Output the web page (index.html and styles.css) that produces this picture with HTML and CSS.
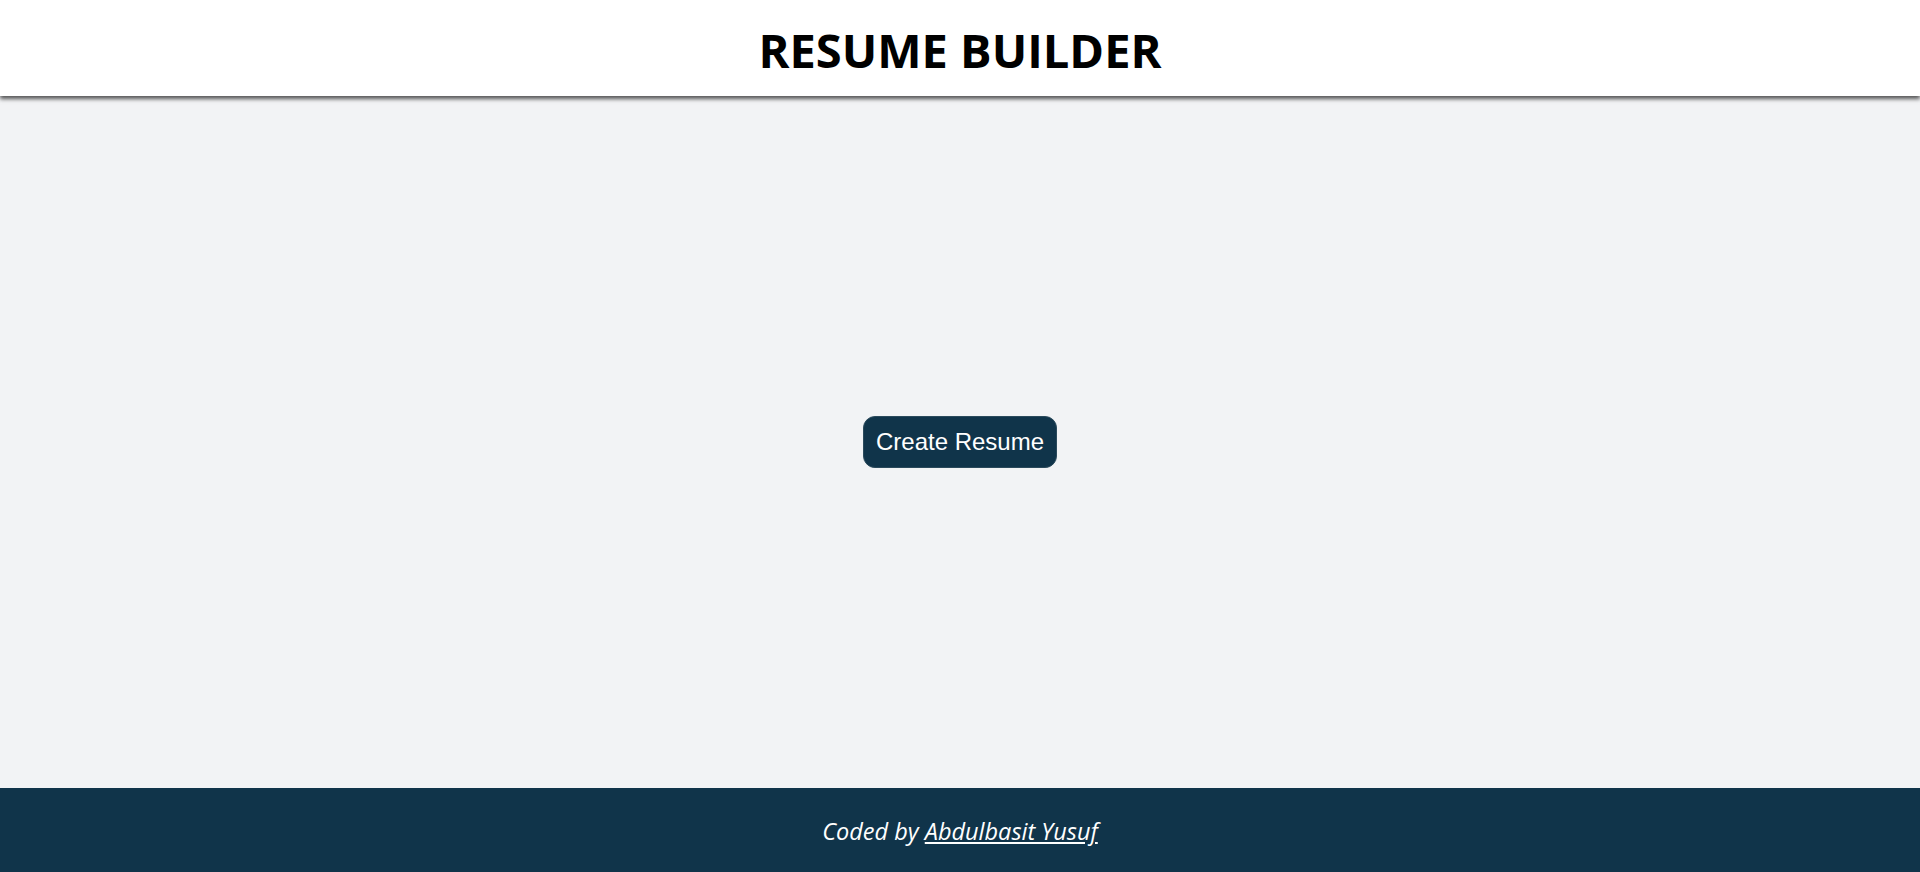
FILE: index.html
```html
<!DOCTYPE html>
<html lang="en">
<head>
<meta charset="utf-8">
<title>Resume Builder</title>
<link rel="stylesheet" href="styles.css">
</head>
<body>
<header class="site-header">
  <h1 class="site-title">RESUME BUILDER</h1>
</header>
<main class="content">
  <button class="create-btn" type="button">Create Resume</button>
</main>
<footer class="site-footer">
  <p class="credit">Coded by <a class="credit-link" href="#">Abdulbasit Yusuf</a></p>
</footer>
</body>
</html>
```
FILE: styles.css
```css
* { box-sizing: border-box; }
html, body { height: 100%; }
body {
  margin: 0;
  display: flex;
  flex-direction: column;
  min-height: 100vh;
  background: #f2f3f5;
  font-family: "Open Sans", "Noto Sans", sans-serif;
}
.site-header {
  height: 96px;
  background: #ffffff;
  display: flex;
  align-items: center;
  justify-content: center;
  box-shadow: 0 3px 4px rgba(0, 0, 0, 0.65);
  position: relative;
  z-index: 1;
}
.site-title {
  margin: 0;
  font-size: 47px;
  font-weight: 700;
  color: #000;
  letter-spacing: 0;
  line-height: 1;
  padding-top: 4px;
}
.content {
  flex: 1;
  display: flex;
  align-items: center;
  justify-content: center;
}
.create-btn {
  font-family: "Liberation Sans", Arial, sans-serif;
  font-size: 24px;
  color: #ffffff;
  background: #10344a;
  border: 1px solid #2b4a5c;
  border-radius: 12px;
  height: 52px;
  padding: 0 12px;
  cursor: pointer;
}
.site-footer {
  height: 84px;
  background: #10344a;
  display: flex;
  align-items: center;
  justify-content: center;
}
.credit {
  margin: 0;
  color: #ffffff;
  font-style: italic;
  font-size: 23.5px;
  padding-top: 2px;
}
.credit-link {
  color: #ffffff;
  text-decoration: underline;
}
```
